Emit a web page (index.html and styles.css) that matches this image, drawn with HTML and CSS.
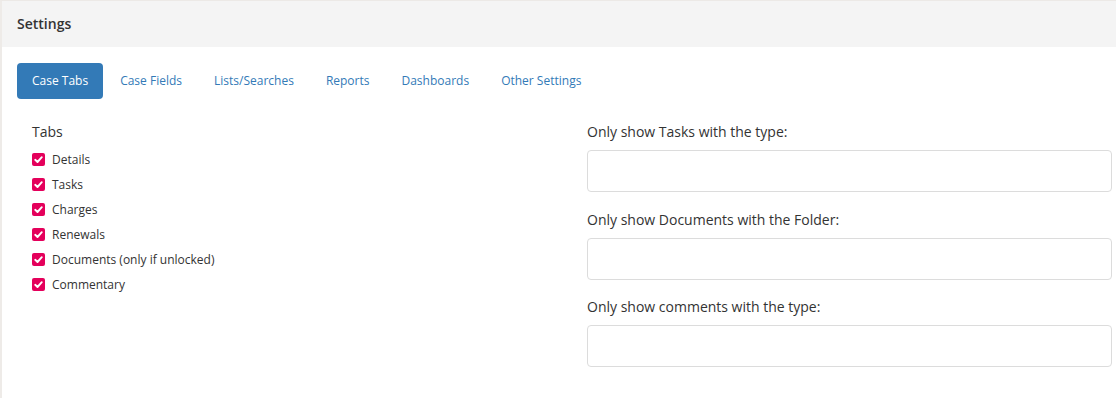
FILE: index.html
```html
<!DOCTYPE html>
<html lang="en">
    <head>
        <meta charset="UTF-8">
        <title>Settings</title>
        <link rel="stylesheet" href="styles.css">
    </head>
    <body>
        <div class="panel">
            <div class="panel-heading">Settings</div>
            <div class="panel-body">
                <ul class="nav-pills">
                    <li class="active"><a href="#">Case Tabs</a></li>
                    <li><a href="#">Case Fields</a></li>
                    <li><a href="#">Lists/Searches</a></li>
                    <li><a href="#">Reports</a></li>
                    <li><a href="#">Dashboards</a></li>
                    <li><a href="#">Other Settings</a></li>
                </ul>

                <div class="row">
                    <div class="col">
                        <div class="group-title">Tabs</div>
                        <label class="check-row"><span class="check"><svg viewBox="0 0 13 13" width="13" height="13"><path d="M3.2 6.8 L5.5 9 L9.8 4.2" fill="none" stroke="#fff" stroke-width="1.9" stroke-linecap="round" stroke-linejoin="round"/></svg></span>Details</label>
                        <label class="check-row"><span class="check"><svg viewBox="0 0 13 13" width="13" height="13"><path d="M3.2 6.8 L5.5 9 L9.8 4.2" fill="none" stroke="#fff" stroke-width="1.9" stroke-linecap="round" stroke-linejoin="round"/></svg></span>Tasks</label>
                        <label class="check-row"><span class="check"><svg viewBox="0 0 13 13" width="13" height="13"><path d="M3.2 6.8 L5.5 9 L9.8 4.2" fill="none" stroke="#fff" stroke-width="1.9" stroke-linecap="round" stroke-linejoin="round"/></svg></span>Charges</label>
                        <label class="check-row"><span class="check"><svg viewBox="0 0 13 13" width="13" height="13"><path d="M3.2 6.8 L5.5 9 L9.8 4.2" fill="none" stroke="#fff" stroke-width="1.9" stroke-linecap="round" stroke-linejoin="round"/></svg></span>Renewals</label>
                        <label class="check-row"><span class="check"><svg viewBox="0 0 13 13" width="13" height="13"><path d="M3.2 6.8 L5.5 9 L9.8 4.2" fill="none" stroke="#fff" stroke-width="1.9" stroke-linecap="round" stroke-linejoin="round"/></svg></span>Documents (only if unlocked)</label>
                        <label class="check-row"><span class="check"><svg viewBox="0 0 13 13" width="13" height="13"><path d="M3.2 6.8 L5.5 9 L9.8 4.2" fill="none" stroke="#fff" stroke-width="1.9" stroke-linecap="round" stroke-linejoin="round"/></svg></span>Commentary</label>
                    </div>
                    <div class="col">
                        <div class="form-group">
                            <label for="task_type">Only show Tasks with the type:</label>
                            <input type="text" id="task_type">
                        </div>
                        <div class="form-group">
                            <label for="doc_folder">Only show Documents with the Folder:</label>
                            <input type="text" id="doc_folder">
                        </div>
                        <div class="form-group">
                            <label for="comment_type">Only show comments with the type:</label>
                            <input type="text" id="comment_type">
                        </div>
                    </div>
                </div>
            </div>
        </div>
    </body>
</html>
```

FILE: styles.css
```css
body {
    margin: 0;
    font-family: "Open Sans", "Liberation Sans", sans-serif;
    color: #333;
    background-color: #fff;
}
.panel {
    border-left: 2px solid #eeebe8;
    border-top: 1px solid #ece9e6;
    min-height: 397px;
}
.panel-heading {
    height: 46px;
    line-height: 46px;
    padding-left: 15px;
    background-color: #f4f4f4;
    font-size: 14px;
    font-weight: 600;
    color: #333;
}
.panel-body {
    padding: 16px 4px 0 15px;
}
.nav-pills {
    display: flex;
    list-style: none;
    margin: 0;
    padding: 0;
}
.nav-pills li {
    margin-right: 2px;
}
.nav-pills a {
    display: block;
    height: 36px;
    line-height: 36px;
    padding: 0 15px;
    border-radius: 4px;
    font-size: 12px;
    color: #337ab7;
    text-decoration: none;
}
.nav-pills li.active a {
    background-color: #337ab7;
    color: #fff;
}
.row {
    display: grid;
    grid-template-columns: 555px 1fr;
    margin-top: 22px;
}
.col {
    padding-left: 15px;
}
.group-title {
    font-size: 14px;
    height: 26px;
    line-height: 22px;
}
.check-row {
    display: flex;
    align-items: center;
    height: 25px;
    font-size: 12px;
}
.check {
    width: 13px;
    height: 13px;
    margin-right: 7px;
    border-radius: 2px;
    background-color: #e4005b;
    display: flex;
}
.form-group {
    margin-bottom: 16.5px;
}
.form-group label {
    display: block;
    font-size: 14px;
    height: 18px;
    line-height: 22px;
    margin-bottom: 11px;
}
.form-group input {
    display: block;
    box-sizing: border-box;
    width: 100%;
    height: 42px;
    border: 1px solid #dcdcdc;
    border-radius: 4px;
    padding: 6px 12px;
    font-family: inherit;
}
```
